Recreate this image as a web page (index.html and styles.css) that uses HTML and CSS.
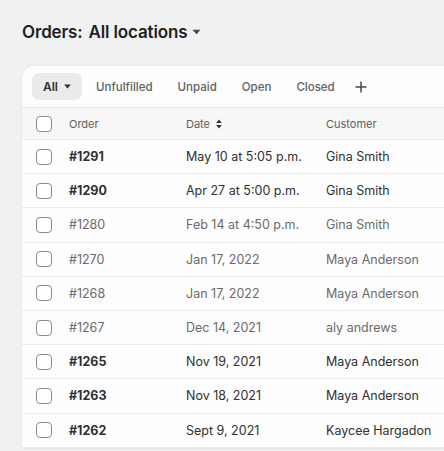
FILE: index.html
```html
<!DOCTYPE html>
<html>
<head>
<meta charset="utf-8">
<link rel="stylesheet" href="styles.css">
</head>
<body>
<div class="page">
  <h1 class="title"><span class="t1">Orders:</span><span class="t2">All locations</span><svg class="caret-lg" width="9" height="6" viewBox="0 0 9 6"><path d="M0.5 0.8h8L4.5 5.2z" fill="#4a4a4a"/></svg></h1>
  <div class="card">
    <div class="tabs">
      <div class="tab active">All<svg class="caret-sm" width="7" height="5" viewBox="0 0 7 5"><path d="M0.2 0.5h6.6L3.5 4.6z" fill="#303030"/></svg></div>
      <div class="tab">Unfulfilled</div>
      <div class="tab">Unpaid</div>
      <div class="tab">Open</div>
      <div class="tab">Closed</div>
      <div class="tab plus"><svg width="12" height="12" viewBox="0 0 12 12"><path d="M6 0.5v11M0.5 6h11" stroke="#4a4a4a" stroke-width="1.5" fill="none"/></svg></div>
    </div>
    <div class="row head">
      <span class="cb"></span><span>Order</span><span class="date-h">Date<svg width="6" height="10" viewBox="0 0 6 10"><path d="M3 0.5L5.8 4H0.2zM3 9.5L5.8 6H0.2z" fill="#303030"/></svg></span><span>Customer</span>
    </div>
    <div class="row strong"><span class="cb"></span><span class="num">#1291</span><span>May 10 at 5:05 p.m.</span><span>Gina Smith</span></div>
    <div class="row strong"><span class="cb"></span><span class="num">#1290</span><span>Apr 27 at 5:00 p.m.</span><span>Gina Smith</span></div>
    <div class="row muted"><span class="cb"></span><span class="num">#1280</span><span>Feb 14 at 4:50 p.m.</span><span>Gina Smith</span></div>
    <div class="row muted"><span class="cb"></span><span class="num">#1270</span><span>Jan 17, 2022</span><span>Maya Anderson</span></div>
    <div class="row muted"><span class="cb"></span><span class="num">#1268</span><span>Jan 17, 2022</span><span>Maya Anderson</span></div>
    <div class="row muted"><span class="cb"></span><span class="num">#1267</span><span>Dec 14, 2021</span><span>aly andrews</span></div>
    <div class="row strong"><span class="cb"></span><span class="num">#1265</span><span>Nov 19, 2021</span><span>Maya Anderson</span></div>
    <div class="row strong"><span class="cb"></span><span class="num">#1263</span><span>Nov 18, 2021</span><span>Maya Anderson</span></div>
    <div class="row strong"><span class="cb"></span><span class="num">#1262</span><span>Sept 9, 2021</span><span>Kaycee Hargadon</span></div>
  </div>
</div>
</body>
</html>
```
FILE: styles.css
```css
html, body {
  margin: 0;
  padding: 0;
  background: #f1f1f1;
  overflow: hidden;
  height: 451px;
}
.page {
  padding: 22px 0 0 22px;
  font-family: Inter, "Noto Sans", sans-serif;
  color: #303030;
}
.title {
  margin: 0;
  height: 20px;
  display: flex;
  align-items: center;
  font-size: 17px;
  font-weight: 600;
  letter-spacing: -0.15px;
  color: #1f1f1f;
}
.t2 { margin-left: 6px; }
.caret-lg { margin-left: 5px; }
.card {
  margin-top: 24px;
  width: 422px;
  background: #fdfdfd;
  border-radius: 12px 0 0 0;
  box-shadow: 0 0 0 1px #e8e8e8, 0 1px 2px rgba(0,0,0,0.06);
}
.tabs {
  display: flex;
  align-items: center;
  height: 41px;
  padding: 0 10px;
  border-bottom: 1px solid #ebebeb;
  gap: 3px;
}
.tab {
  height: 27px;
  padding: 0 11px;
  display: flex;
  align-items: center;
  border-radius: 7px;
  font-size: 11.5px;
  font-weight: 500;
  color: #616161;
}
.tab.active {
  background: #ebebeb;
  color: #303030;
  font-size: 12px;
  font-weight: 600;
  padding: 0 11px 0 11px;
}
.caret-sm { margin-left: 6px; }
.tab.plus { padding: 0 6px; }
.row {
  display: grid;
  grid-template-columns: 33px 117px 140px 1fr;
  align-items: center;
  padding-left: 14px;
  height: 33.2px;
  border-bottom: 1px solid #ebebeb;
  font-size: 12.5px;
  white-space: nowrap;
}
.row.head {
  height: 31px;
  background: #f7f7f7;
  font-size: 11px;
  color: #616161;
  font-weight: 400;
}
.date-h { display: flex; align-items: center; gap: 6px; }
.date-h svg { margin-top: 1px; }
.cb {
  box-sizing: border-box;
  width: 16px;
  height: 16px;
  border: 1.5px solid #8a8a8a;
  border-radius: 4px;
  background: #fff;
}
.row.strong { color: #303030; }
.row.strong .num { font-weight: 700; }
.row.muted { color: #6b6b6b; }
```
